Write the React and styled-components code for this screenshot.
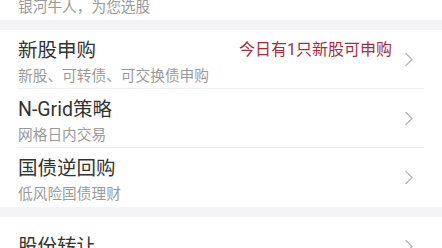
import React from "react";
import styled, { createGlobalStyle } from "styled-components";

const Global = createGlobalStyle`
  html, body { margin: 0; padding: 0; background: #ffffff; overflow: hidden; }
  body { font-family: Roboto, "Noto Sans CJK SC", "Noto Sans", sans-serif; }
`;

const Page = styled.div`
  width: 442px;
  height: 248px;
  overflow: hidden;
  background: #ffffff;
`;

const Scroller = styled.div`
  margin-top: -3px;
`;

const Card = styled.div`
  background: #ffffff;
  padding: 0 18px 0 17px;
`;

const Band = styled.div`
  height: 10px;
  background: #f4f3f6;
`;

const Row = styled.div`
  display: flex;
  align-items: center;
  height: 59px;
  box-sizing: border-box;
  border-bottom: ${(p) => (p.$last ? "none" : "1px solid #efeff1")};
`;

const Texts = styled.div`
  flex: 1;
  display: flex;
  flex-direction: column;
  align-self: ${(p) => (p.$single ? "center" : "flex-start")};
  padding-top: ${(p) => (p.$single ? 0 : 9)}px;
  padding-left: 1px;
`;

const Title = styled.div`
  font-size: 19.5px;
  line-height: 24px;
  color: #333333;
`;

const Sub = styled.div`
  font-size: 14.7px;
  line-height: 20px;
  margin-top: 3px;
  color: #9a9a9a;
`;

const TopSub = styled.div`
  font-size: 14.7px;
  line-height: 20px;
  padding: 0 0 3px 1px;
  color: #9a9a9a;
`;

const Note = styled.div`
  align-self: flex-start;
  margin-top: 9px;
  font-size: 16px;
  line-height: 22px;
  color: #ab2b3d;
  margin-right: 11px;
`;

const Chevron = styled.svg`
  width: 12px;
  height: 15px;
  margin-right: 9px;
  flex: none;
`;

const Arrow = () => (
  <Chevron viewBox="0 0 12 15">
    <path d="M3 1.5 L9 7.5 L3 13.5" fill="none" stroke="#bdbdbd" strokeWidth="1.6" strokeLinecap="round" strokeLinejoin="round" />
  </Chevron>
);

const Item = ({ title, sub, note, last }) => (
  <Row $last={last}>
    <Texts $single={!sub}>
      <Title>{title}</Title>
      {sub && <Sub>{sub}</Sub>}
    </Texts>
    {note && <Note>{note}</Note>}
    <Arrow />
  </Row>
);

export default function App() {
  return (
    <Page>
      <Global />
      <Scroller>
        <Card>
          <TopSub>银河牛人，为您选股</TopSub>
        </Card>
        <Band />
        <Card>
          <Item title="新股申购" sub="新股、可转债、可交换债申购" note="今日有1只新股可申购" />
          <Item title="N-Grid策略" sub="网格日内交易" />
          <Item title="国债逆回购" sub="低风险国债理财" last />
        </Card>
        <Band />
        <Card>
          <Item title="股份转让" last />
        </Card>
      </Scroller>
    </Page>
  );
}
